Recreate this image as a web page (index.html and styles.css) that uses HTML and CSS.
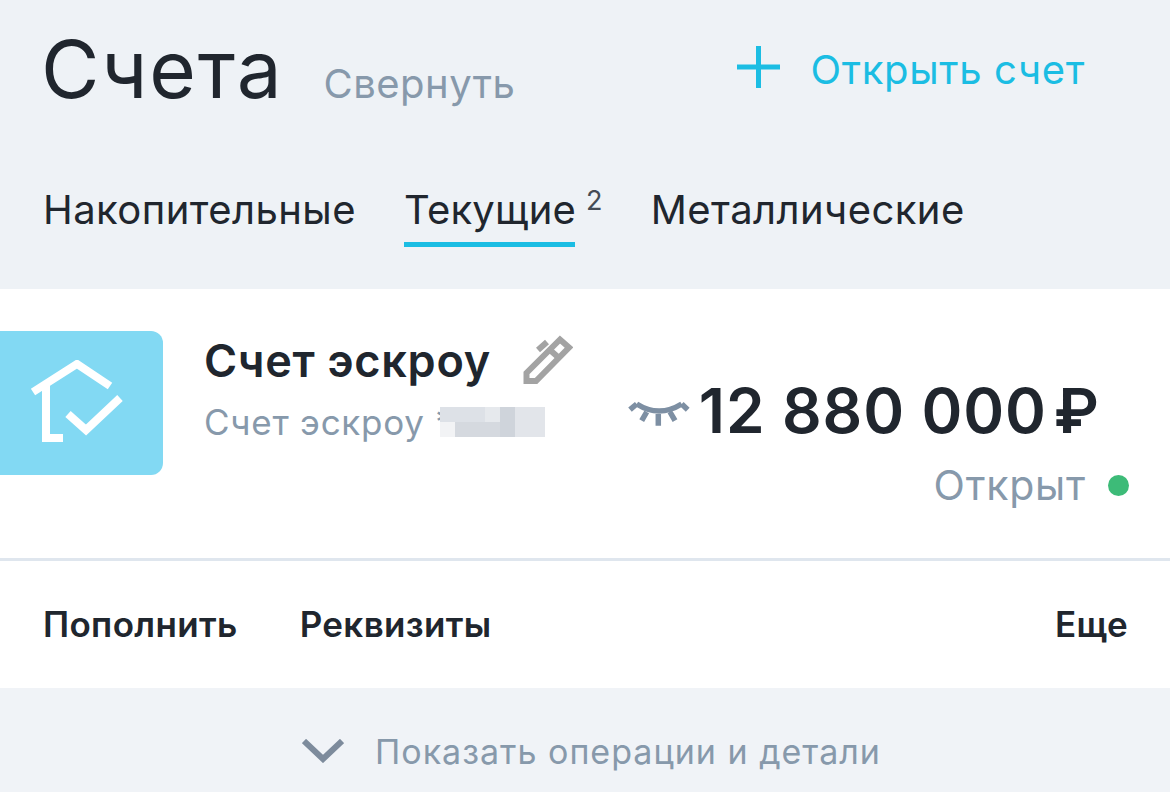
FILE: index.html
```html
<!DOCTYPE html>
<html lang="ru">
<head>
  <meta charset="UTF-8">
  <meta name="viewport" content="width=device-width, initial-scale=1.0">
  <title>Счета</title>
  <link rel="stylesheet" href="styles.css">
</head>
<body>
  <div class="top">
    <div class="head">
      <h1>Счета</h1>
      <span class="collapse">Свернуть</span>
      <a class="open">
        <svg class="plus" width="43" height="42" viewBox="0 0 43 42"><path d="M21.5 0V42M0 21H43" /></svg>
        Открыть счет
      </a>
    </div>
    <div class="tabs">
      <span class="tab">Накопительные</span>
      <span class="tab active">Текущие<sup>2</sup></span>
      <span class="tab">Металлические</span>
    </div>
  </div>

  <div class="card">
    <div class="account">
      <div class="logo">
        <svg width="100" height="84" viewBox="0 0 100 84">
          <path d="M3 32L47 4L80 26M16 24V78H33M38 54L56 70L90 38" />
        </svg>
      </div>
      <div class="info">
        <div class="name">
          Счет эскроу
          <svg class="pencil" width="50" height="50" viewBox="0 0 50 50">
            <path d="M3.5 46V38L37 4.5L46 12.5L13 46Z" />
            <path d="M27 15L36 23M15 15L24 7" />
          </svg>
        </div>
        <div class="number">
          Счет эскроу *
          <div class="blur">
            <i></i><i></i><i></i><i></i><i></i><i></i><i></i>
            <i></i><i></i><i></i><i></i><i></i><i></i><i></i>
          </div>
        </div>
      </div>
      <div class="money">
        <div class="sum">
          <svg class="eye" width="62" height="28" viewBox="0 0 62 28">
            <path d="M8.7 5Q31 19 53.7 5M8.7 5L2 10.7M53.7 5L59.7 10.7M18.7 13L13.7 21.7M30.3 15V26.7M42 13L47 21.7" />
          </svg>
          <span class="digits">12 880 000</span>
          <span class="rub">₽</span>
        </div>
        <div class="status">Открыт <span class="dot"></span></div>
      </div>
    </div>
    <div class="actions">
      <span>Пополнить</span>
      <span>Реквизиты</span>
      <span class="more">Еще</span>
    </div>
  </div>

  <div class="details">
    <svg class="chevron" width="42" height="24" viewBox="0 0 42 24"><path d="M2 2L21 20L40 2" /></svg>
    Показать операции и детали
  </div>
</body>
</html>
```

FILE: styles.css
```css
html, body { height: 100%; }
body { margin: 0; background: #f0f3f7; color: #20262e; font-family: Inter, "Noto Sans", sans-serif; overflow: hidden; }
svg { display: block; fill: none; }

.top { height: 289px; background: #eef2f6; padding: 0 44px; box-sizing: border-box; }
.head { display: flex; align-items: baseline; padding-top: 23px; height: 110px; box-sizing: border-box; }
h1 { margin: 0 0 0 -3px; font-size: 80px; font-weight: 400; line-height: 92px; letter-spacing: 1.8px; }
.collapse { margin-left: 40px; font-size: 40px; color: #8799ab; letter-spacing: .5px; }
.open { align-self: flex-start; margin-left: auto; margin-right: 41px; margin-top: 22px; display: flex; align-items: center; gap: 31px; font-size: 40px; color: #1bbde3; letter-spacing: .65px; }
.plus { stroke: #1bbde3; stroke-width: 5; margin-top: -6px; }

.tabs { display: flex; gap: 48px; margin: 76px 0 0 -1px; font-size: 40px; line-height: 47px; }
.tab { letter-spacing: .45px; padding-bottom: 13px; }
.tab.active { position: relative; letter-spacing: .2px; }
.tab.active::after { content: ""; position: absolute; left: 0; bottom: -1px; height: 5px; background: #1bbde3; width: 171px; }
.tab sup { font-size: 27px; line-height: 0; margin-left: 10px; vertical-align: 14px; color: #444b55; }

.card { background: #fff; height: 399px; }
.account { display: flex; height: 272px; box-sizing: border-box; padding-top: 42px; border-bottom: 3px solid #dfe6ee; }
.logo { width: 163px; height: 144px; background: #82d9f3; border-radius: 0 12px 12px 0; display: flex; align-items: center; justify-content: center; }
.logo svg { stroke: #fff; stroke-width: 8; margin-left: -3px; margin-top: -2px; }
.info { margin-left: 41px; }
.name { display: flex; align-items: center; gap: 32px; font-size: 45px; font-weight: 600; line-height: 50px; height: 50px; margin-top: 5px; letter-spacing: .7px; }
.pencil { stroke: #a3a3a3; stroke-width: 6; margin-top: -2px; }
.number { display: flex; margin-top: 16px; font-size: 35px; line-height: 40px; color: #8799ab; letter-spacing: .75px; }
.blur { display: grid; grid-template-columns: repeat(7, 15px); grid-auto-rows: 15px; margin: 5px 0 0 -14px; }
.blur i { background: #dde1e7; }
.blur i:nth-child(4) { background: #e6e9ed; }
.blur i:nth-child(5), .blur i:nth-child(12) { background: #cfd4db; }
.blur i:nth-child(6), .blur i:nth-child(7), .blur i:nth-child(13), .blur i:nth-child(14) { background: #e2e5ea; }
.blur i:nth-child(8) { background: #f2f3f5; }
.blur i:nth-child(9), .blur i:nth-child(10), .blur i:nth-child(11) { background: #d5d9df; }

.money { margin-left: auto; margin-right: 41px; margin-top: 46px; display: flex; flex-direction: column; align-items: flex-end; }
.sum { display: flex; align-items: center; gap: 9px; font-size: 62px; font-weight: 600; line-height: 68px; margin-right: 30px; }
.digits { letter-spacing: .9px; }
.rub { margin-left: -2px; }
.eye { stroke: #7d8fa3; stroke-width: 5.5; margin-top: 4px; }
.status { display: flex; align-items: center; gap: 22px; margin-top: 17px; font-size: 41px; line-height: 46px; color: #8799ab; letter-spacing: .8px; }
.dot { width: 21px; height: 21px; border-radius: 50%; background: #3dbb78; }

.actions { display: flex; gap: 62px; padding: 0 43px 2px; height: 127px; box-sizing: border-box; align-items: center; font-size: 35px; font-weight: 600; letter-spacing: .35px; }
.more { margin-left: auto; margin-right: -1px; }

.details { display: flex; align-items: center; gap: 31px; padding: 22px 0 0 302px; height: 104px; box-sizing: border-box; font-size: 34px; color: #8799ab; letter-spacing: 1px; }
.chevron { stroke: #7d8b9c; stroke-width: 6; }
```
